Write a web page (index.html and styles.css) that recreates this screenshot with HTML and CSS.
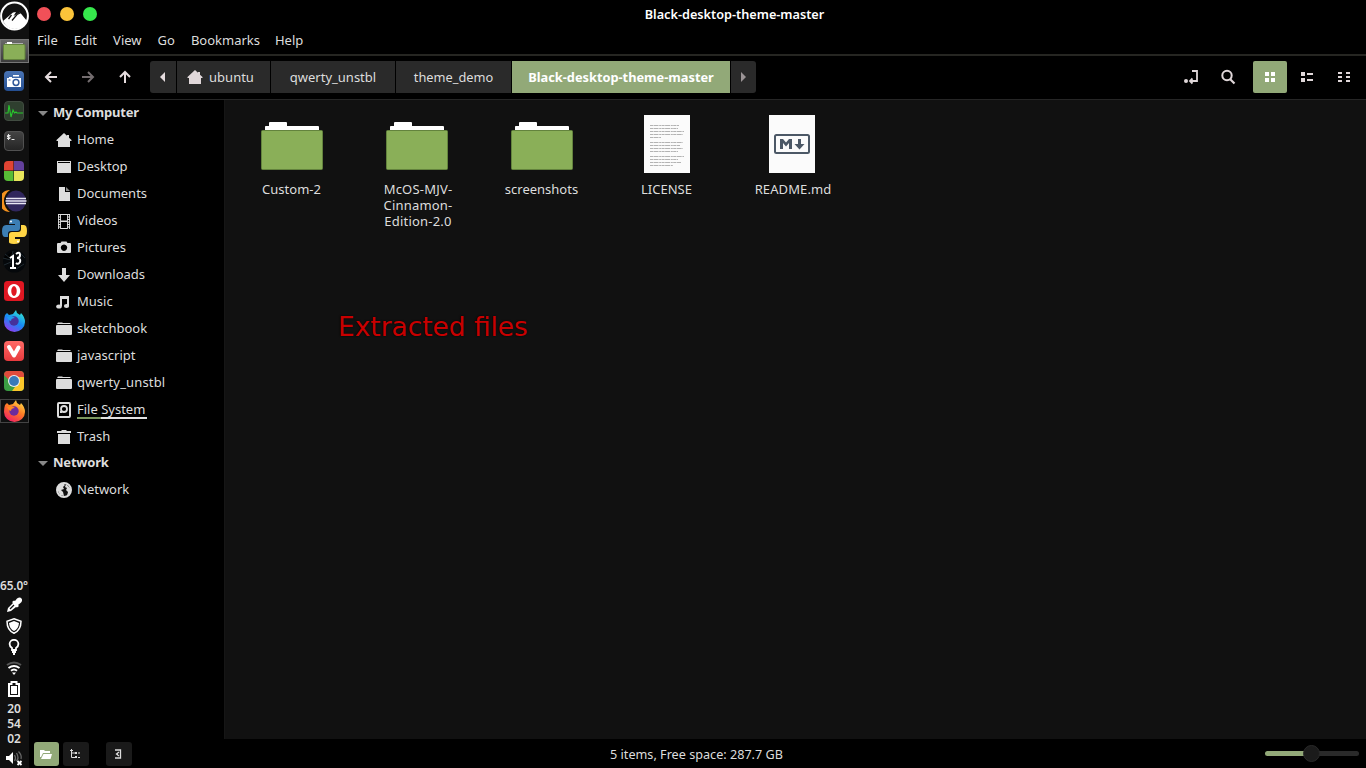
FILE: index.html
```html
<!DOCTYPE html>
<html lang="en">
<head>
<meta charset="utf-8">
<title>Black-desktop-theme-master</title>
<link rel="stylesheet" href="styles.css">
</head>
<body>
<svg class="defs" width="0" height="0">
  <defs>
    <linearGradient id="blue" x2="0" y2="1"><stop stop-color="#4a74b4"/><stop offset="1" stop-color="#244e91"/></linearGradient>
    <linearGradient id="dark" x2="0" y2="1"><stop stop-color="#444"/><stop offset="1" stop-color="#242424"/></linearGradient>
    <linearGradient id="fx" x1=".8" x2=".2" y2="1"><stop stop-color="#ffe14a"/><stop offset=".45" stop-color="#ff7b24"/><stop offset="1" stop-color="#f0196a"/></linearGradient>
    <linearGradient id="fd" x1=".8" x2=".2" y2="1"><stop stop-color="#36edd0"/><stop offset=".5" stop-color="#168af5"/><stop offset="1" stop-color="#9b35ef"/></linearGradient>
    <linearGradient id="red" x2="0" y2="1"><stop stop-color="#ff6a66"/><stop offset="1" stop-color="#e83a3e"/></linearGradient>
  </defs>
  <symbol id="home" viewBox="0 0 16 16"><path d="M8 1 L0.5 8 V9 H2 V15 H14 V9 H15.5 V8 L13 5.7 V3 H11 V3.8Z"/></symbol>
  <symbol id="folder" viewBox="0 0 16 16"><path d="M1 3 L2 1.500 H6 L7 2 H14 L15 3Z M0 5 Q0 4 1 4 H15 Q16 4 16 5 V13 Q16 14 15 14 H1 Q0 14 0 13Z"/></symbol>
  <symbol id="bigfolder" viewBox="0 0 62 50"><path d="M4 12V6.500Q4 6 5 6H8V3Q8 2 9 2H25Q26 2 26 3V6H57Q58 6 58 7V12Z" fill="#fff"/><rect x=".5" y="10.500" width="61" height="39" rx="1" fill="#8aaf58" stroke="#63833d"/></symbol>
</svg>
<div class="desktop">
  <nav class="dock">
    <div class="launch logo"><svg width="29" height="30" viewBox="0 0 29 30"><circle cx="14.500" cy="15" r="13.400" fill="#111" stroke="#fff" stroke-width="2"/><path d="M3 20 13 11.500 16 11 13.500 15 20 11.500 27 20 Q23 28 14.500 28 Q7 28 3 20Z" fill="#fff"/><path d="m12 19.500 5-6 4-2M11.500 14 8.500 18" fill="none" stroke="#111" stroke-width="1.300"/></svg></div>
    <div class="launch files"><svg width="23" height="20" viewBox="0 0 23 20"><path d="M2 5V2.500H4V1H9V2.500H20V5Z" fill="#fff"/><rect x=".5" y="3.500" width="21.500" height="15" rx="1" fill="#8aaf58" stroke="#63833d"/></svg></div>
    <div class="launch"><svg width="20" height="20"><rect width="20" height="20" rx="4" fill="url(#blue)"/><path d="M9 4h6v1.500H9zM3 7h2V6h3v1h9v9H3z" fill="#fff"/><circle cx="12" cy="11.500" r="2.900" fill="#fff" stroke="#31599a" stroke-width="1.500"/><path d="M4.500 9h2" stroke="#31599a"/></svg></div>
    <div class="launch"><svg width="20" height="20"><rect x=".5" y=".5" width="19" height="19" rx="3.500" fill="#2f3f2f" stroke="#414c41"/><path d="M1 12h3l1-8 2 12 2-7 1.500 3 1.500-1 1 1h6" fill="none" stroke="#28c72d" stroke-width="1.100"/></svg></div>
    <div class="launch"><svg width="20" height="20"><rect x=".5" y=".5" width="19" height="19" rx="3.500" fill="url(#dark)" stroke="#515151"/><path d="M4.500 3v6M6.500 4.500H3.500v1.500H6v1.500H3M7.500 8.500h3" fill="none" stroke="#e8e8e8"/></svg></div>
    <div class="launch"><svg width="20" height="20"><path d="M4 0h5.500v9.500H0V4q0-4 4-4" fill="#e04433"/><path d="M10 0h6q4 0 4 4v5.500H10z" fill="#63409b"/><path d="M0 10h9.500v10H4q-4 0-4-4z" fill="#58bd36"/><path d="M10 10h10v6q0 4-4 4h-6z" fill="#e9e65b"/></svg></div>
    <div class="launch"><svg width="25" height="22"><path d="M8 0A11 11 0 0 0 8 22A13 13 0 0 1 8 0" fill="#f5921e"/><ellipse cx="14" cy="11" rx="10" ry="10.500" fill="#30265d"/><path d="M4 8.500h20M3.500 11h21M4 13.500h20" stroke="#e8e6f4" stroke-width="1.400"/></svg></div>
    <div class="launch"><svg width="25" height="25" viewBox="0 0 25 25"><path d="M12 0q6 0 6 3v6q0 3-3 3H9q-3 0-3 3v3H3q-3 0-3-6t4-6h9V5H7V3q0-3 5-3" fill="#3c7eb4"/><path d="M19 6h3q3 0 3 6t-4 6h-8v2h5v2q0 3-6 3t-5-3v-6q0-3 3-3h6q3 0 3-3z" fill="#ffd545"/><circle cx="9" cy="2.500" r="1" fill="#fff"/><circle cx="16" cy="22.500" r="1" fill="#fff"/></svg></div>
    <div class="launch"><svg width="25" height="24"><circle cx="12.500" cy="12" r="11.500" fill="#05080b"/><path d="m1 9 8 2 2-9M2 16l7-3M14 20l8-5M3 5l6 5M17 3l6 6" stroke="#27333b" stroke-width=".8"/><path d="M8 9l3-2v12M8 19h6M14 5q4-3 4 1 0 3-3 3 4 0 3 4-2 3-4 1" fill="none" stroke="#fff" stroke-width="2"/></svg></div>
    <div class="launch"><svg width="20" height="20"><rect width="20" height="20" rx="3.500" fill="#df1722"/><path fill-rule="evenodd" d="M10 3a6.300 7 0 1 0 .01 0zM10 5a2.700 5 0 1 1-.01 0z" fill="#fff"/></svg></div>
    <div class="launch"><svg width="22" height="22" viewBox="0 0 22 22"><path d="M2 5l2-2 2 2 4-1 3-4 1 3 3 2 1-2q4 4 4 9a10.500 10 0 0 1-21 0q0-4 1-7" fill="url(#fd)"/><circle cx="11" cy="11" r="4.700" fill="#45309b"/><path d="M4 7q5-2 8 1-4 0-4 3-3-1-4-4" fill="#2299ee"/></svg></div>
    <div class="launch"><svg width="20" height="20"><rect width="20" height="20" rx="4" fill="url(#red)"/><path d="M5 6l5 8.500 4.500-8" fill="none" stroke="#fff" stroke-width="4" stroke-linecap="round" stroke-linejoin="round"/></svg></div>
    <div class="launch"><svg width="20" height="20"><rect width="20" height="20" rx="4" fill="#3b9d43"/><path d="M0 4q0-4 4-4h12q4 0 4 4v2H9L5 9z" fill="#df4b3c"/><path d="M11 6h9v10q0 4-4 4H8l6-8z" fill="#fbc72a"/><circle cx="10" cy="10" r="6" fill="#eee"/><circle cx="10" cy="10" r="4.900" fill="#3979b9"/></svg></div>
    <div class="launch running"><svg width="22" height="22" viewBox="0 0 22 22"><path d="M2 5l2-2 2 2 4-1 3-4 1 3 3 2 1-2q4 4 4 9a10.500 10 0 0 1-21 0q0-4 1-7" fill="url(#fx)"/><circle cx="11" cy="11" r="4.700" fill="#6b2b9d"/><path d="M4 7q5-2 8 1-4 0-4 3-3-1-4-4" fill="#ff8a22"/></svg></div>
    <div class="tray">
      <span class="temp">65.0°</span>
      <svg width="16" height="16"><path d="M1 15l1-4 5-5-1-1 2-1.500L9 4l2-2.500q3-2 4.500 0T14.500 6L12 8l1 1-2 1.500L10 10l-5 4z" fill="#fff"/><path d="M4 12l4-4" stroke="#111" stroke-width="1.300"/></svg>
      <svg width="16" height="16"><path d="M8 .8l7 2.400q0 9-7 12-7-3-7-12z" fill="none" stroke="#fff" stroke-width="1.500"/><path d="M8 3l5 2q-.5 6-5 8-4.500-2-5-8z" fill="#fff"/></svg>
      <svg width="16" height="16"><path d="M6 11V9Q3.600 7.500 3.600 5a4.400 4.200 0 0 1 8.800 0q0 2.500-2.400 4v2zM6 13h4M7 15h2" fill="none" stroke="#fff" stroke-width="1.800"/></svg>
      <svg width="16" height="16"><path d="M1 5q7-5 14 0" fill="none" stroke="#555" stroke-width="2"/><path d="M2.500 8q5.500-4 11 0M5 10.700q3-2.500 6 0" fill="none" stroke="#fff" stroke-width="1.900"/><path d="M6 12.500h4L8 15z" fill="#fff"/></svg>
      <svg width="16" height="16"><path d="M3 3h2.500V1h5v2H13v12H3z" fill="none" stroke="#fff" stroke-width="2"/><path d="M5 5h6v8H5z" fill="#fff"/></svg>
      <div class="clock"><span>20</span><span>54</span><span>02</span></div>
      <svg width="18" height="16"><path d="M1 6h3l4-4v12l-4-4H1z" fill="#fff"/><path d="M9.500 5q2 3 0 6M11.500 3q3 5 0 8M13.500 1.500Q17 5 16 9" fill="none" stroke="#666" stroke-width="1.300"/><path d="m12.500 11 4 4m0-4-4 4" stroke="#fff" stroke-width="1.900"/></svg>
    </div>
  </nav>
  <main class="window">
    <header class="titlebar"><div class="lights"><i class="close"></i><i class="min"></i><i class="max"></i></div><h1>Black-desktop-theme-master</h1></header>
    <div class="menubar"><span>File</span><span>Edit</span><span>View</span><span>Go</span><span class="bm">Bookmarks</span><span>Help</span></div>
    <div class="toolbar">
      <div class="arrows">
        <svg width="16" height="16"><path d="M14 8H3M8 3L3 8l5 5"/></svg>
        <svg class="dim" width="16" height="16"><path d="M2 8h11M8 3l5 5-5 5"/></svg>
        <svg width="16" height="16"><path d="M8 14V3M3 8l5-5 5 5"/></svg>
      </div>
      <div class="crumbs">
        <span class="c-prev"><svg width="6" height="10"><path d="M5 0v10L0 5z" fill="#e5dcde"/></svg></span>
        <span class="c-home"><svg width="16" height="16" fill="#e0d7d9"><use href="#home"/></svg>ubuntu</span>
        <span class="c-user">qwerty_unstbl</span>
        <span class="c-demo">theme_demo</span>
        <span class="c-active">Black-desktop-theme-master</span>
        <span class="c-next"><svg width="6" height="10"><path d="M1 0v10l5-5z" fill="#9b9496"/></svg></span>
      </div>
      <div class="tools">
        <svg class="entry" width="16" height="16"><circle cx="3" cy="12" r="2" fill="#e0d7d9"/><path d="M9 2h5v10H7M9.500 9.500L7 12l2.500 2.500" fill="none" stroke="#e0d7d9" stroke-width="1.800"/></svg>
        <svg class="search" width="16" height="16"><circle cx="7" cy="6.500" r="4.700" fill="none" stroke="#e0d7d9" stroke-width="2"/><path d="m10 10 4.500 4.500" stroke="#e0d7d9" stroke-width="2.200"/></svg>
        <span class="view"><svg width="10" height="10"><path d="M0 0h4v4H0zM6 0h4v4H6zM0 6h4v4H0zM6 6h4v4H6z" fill="#fff"/></svg></span>
        <svg class="list" width="12" height="10"><path d="M0 0h4v4H0zM6 1h6v2H6zM0 6h4v4H0zM6 7h6v2H6z" fill="#e0d7d9"/></svg>
        <svg class="compact" width="12" height="10"><path d="M0 0h4v2H0zM8 0h4v2H8zM0 4h4v2H0zM8 4h4v2H8zM0 8h4v2H0zM8 8h4v2H8z" fill="#e0d7d9"/></svg>
      </div>
    </div>
    <div class="body">
      <aside class="sidebar">
        <h2><i></i>My Computer</h2>
        <div class="place"><svg width="16" height="16"><use href="#home"/></svg><span>Home</span></div>
        <div class="place"><svg width="16" height="16"><path d="M1 2h14v1H1zM1 4h14v10H1zM1 2h1v4H1zM14 2h1v4h-1z"/></svg><span>Desktop</span></div>
        <div class="place"><svg width="16" height="16"><path d="M3 1h6v5h5v9H3z"/><path d="M10 1l4 4h-4z" fill="#888"/></svg><span>Documents</span></div>
        <div class="place"><svg width="16" height="16"><path fill-rule="evenodd" d="M2 1h12v15H2zM5 2v5.500h6V2zM5 9v6h6V9z"/><path d="M3.500 2v14M12.500 2v14" stroke="#000" stroke-dasharray="1.500 1" stroke-width="1.200"/></svg><span>Videos</span></div>
        <div class="place"><svg width="16" height="16"><path fill-rule="evenodd" d="M2 3h2.500l1-1.500h5l1 1.500H14q1 0 1 1v8q0 1-1 1H2q-1 0-1-1V4q0-1 1-1zM8 4.500a3.200 3.200 0 1 0 .01 0z"/></svg><span>Pictures</span></div>
        <div class="place"><svg width="16" height="16"><path d="M6 1h4v7h4l-6 7-6-7h4z"/></svg><span>Downloads</span></div>
        <div class="place"><svg width="16" height="16"><path d="M4 2h9v3H4zM4 4h2v8H4zM11 4h2v8h-2z"/><ellipse cx="3" cy="12.500" rx="2.800" ry="2"/><ellipse cx="10.500" cy="12" rx="2.600" ry="2"/></svg><span>Music</span></div>
        <div class="place"><svg width="16" height="16"><use href="#folder"/></svg><span>sketchbook</span></div>
        <div class="place"><svg width="16" height="16"><use href="#folder"/></svg><span>javascript</span></div>
        <div class="place"><svg width="16" height="16"><use href="#folder"/></svg><span class="wide">qwerty_unstbl</span></div>
        <div class="place"><svg width="16" height="16"><rect x="2" y="1" width="12" height="14" rx="1" fill="none" stroke="#ddd" stroke-width="2"/><circle cx="8" cy="7" r="3" fill="none" stroke="#ddd" stroke-width="1.800"/><path d="M4 9h2v2H4z"/></svg><span class="disk">File System</span></div>
        <div class="place"><svg width="16" height="16"><path d="M1 2h4l1-1h4l1 1h4v2H1zM2 5h12v10H2z"/></svg><span>Trash</span></div>
        <h2><i></i>Network</h2>
        <div class="place"><svg width="16" height="16"><circle cx="8" cy="8" r="7" fill="#111" stroke="#ddd" stroke-width="2"/><path d="M2 4l5-3 2 2-2 2 1 2-3 1 2 2 1 4-4-1-2-4zM10 2l4 4v5l-3 3 1-4-2-2 1-2-2-1z"/></svg><span>Network</span></div>
      </aside>
      <section class="files-view">
        <div class="file"><svg width="62" height="60"><use href="#bigfolder" y="5" height="50"/></svg><span>Custom-2</span></div>
        <div class="file"><svg width="62" height="60"><use href="#bigfolder" y="5" height="50"/></svg><span class="mc">McOS-MJV-<br>Cinnamon-<br>Edition-2.0</span></div>
        <div class="file"><svg width="62" height="60"><use href="#bigfolder" y="5" height="50"/></svg><span>screenshots</span></div>
        <div class="file"><svg width="46" height="60"><path d="M0 0h46v58H0z" fill="#fbfbfb"/><path d="M6 10.500h29M6 13.500h28M6 16.500h34M6 19.500h33M6 22.500h11M6 27.500h33M6 30.500h30M6 33.500h33M6 36.500h28M6 41.500h34M6 44.500h28M6 47.500h31M6 50.500h23" stroke="#b3b3b3" stroke-dasharray="3 .5 5 .7 2 .4"/></svg><span>LICENSE</span></div>
        <div class="file"><svg width="46" height="60"><path d="M0 0h46v58H0z" fill="#fbfbfb"/><rect x="6" y="20" width="34" height="18" rx="1.500" fill="none" stroke="#4c5866" stroke-width="2"/><path d="M11 34V24h3l3 3.500 3-3.500h3v10h-3v-6l-3 3.500-3-3.500v6zM29 24h3v5h3.500l-5 5.500-5-5.500H29z" fill="#4c5866"/></svg><span class="readme">README.md</span></div>
        <p class="note">Extracted files</p>
      </section>
    </div>
    <footer class="status">
      <div class="side-buttons">
        <span class="on"><svg width="12" height="10"><path d="M0 1h4l1 1h5v2H3L1 8H0z M3.500 5H12l-1.500 5H1z" fill="#fff"/></svg></span>
        <span><svg width="10" height="10"><path d="M1.500 0v8.500H5M1.500 4H5M0 1.500h3" fill="none" stroke="#ddd"/><path d="M5 3h2v2H5zM8 3.500h2v1H8zM5 7h2v2H5zM8 8h2v1H8z" fill="#ddd"/></svg></span>
        <span class="hide"><svg width="8" height="10"><path d="M1 1h5.500v8H1M5 3L2.500 5 5 7M2.500 5H4" fill="none" stroke="#ddd" stroke-width="1.300"/></svg></span>
      </div>
      <span class="summary">5 items, Free space: 287.7 GB</span>
      <div class="slider"><i></i></div>
    </footer>
  </main>
</div>
</body>
</html>
```
FILE: styles.css
```css
* { box-sizing: border-box; }
body { margin: 0; background: #000; color: #ddd; font: 13px/16px "Noto Sans", "Open Sans", sans-serif; overflow: hidden; }
svg { display: block; flex: none; }
.defs { position: absolute; }
h1, h2, p { margin: 0; font-size: 13px; }
.desktop { display: flex; width: 1366px; height: 768px; }

.dock { width: 29px; flex: none; background: #101010; display: flex; flex-direction: column; padding-top: 1px; }
.launch { width: 29px; height: 24px; margin-bottom: 6px; padding-right: 1px; display: flex; align-items: center; justify-content: center; flex: none; }
.logo { height: 30px; margin-bottom: 8px; padding: 0; }
.files { background: linear-gradient(#686868, #3c3c3c); border: 1px solid #777; }
.running { border: 1px solid #444; }
.tray { margin-top: auto; display: flex; flex-direction: column; align-items: center; height: 192px; padding: 1px 1px 0 0; font-weight: 600; font-size: 12px; }
.tray > svg { margin-bottom: 5px; }
.temp { font-size: 11.800px; letter-spacing: -.1px; margin: 0 -2px 4px; white-space: nowrap; }
.clock { display: flex; flex-direction: column; line-height: 15px; margin: -1px 0 4px; }
.clock span { display: block; }

.window { flex: 1; min-width: 0; display: flex; flex-direction: column; }
.titlebar { height: 28px; position: relative; display: flex; justify-content: center; align-items: center; padding-left: 74px; }
.titlebar h1 { font-weight: 600; font-size: 12.700px; color: #fff; }
.lights { position: absolute; left: 8px; top: 7px; display: flex; gap: 9px; }
.lights i { width: 14px; height: 14px; border-radius: 50%; background: #f15058; }
.lights .min { background: #fbc43a; }
.lights .max { background: #36e84c; }
.menubar { height: 28px; padding: 4px 0 0 8px; display: flex; gap: 16px; border-bottom: 2px solid #262622; }
.menubar .bm { margin-right: -1px; }
.toolbar { height: 44px; display: flex; align-items: center; padding: 0 9px 1px 14px; border-bottom: 1px solid #262626; }
.arrows { display: flex; gap: 21px; margin-right: 17px; }
.arrows svg { fill: none; stroke: #e5dcde; stroke-width: 2; }
.arrows .dim { stroke: #746d6f; }
.crumbs { display: flex; gap: 1px; height: 32px; }
.crumbs > span { background: #2a2a2a; display: flex; align-items: center; justify-content: center; white-space: nowrap; }
.crumbs .c-prev { width: 26px; border-radius: 3px 0 0 3px; }
.crumbs .c-home { width: 93px; gap: 6px; padding-right: 6px; }
.crumbs .c-user { width: 124px; }
.crumbs .c-demo { width: 115px; font-size: 12.800px; }
.crumbs .c-active { width: 218px; background: #92a978; color: #fff; font-weight: 700; font-size: 12.800px; }
.crumbs .c-next { width: 25px; border-radius: 0 3px 3px 0; }
.crumbs .c-next svg, .side-buttons svg { margin-right: 2px; }
.tools { margin-left: auto; display: flex; align-items: center; }
.search { margin-left: 21px; }
.view { width: 34px; height: 32px; margin: 0 14px 0 17px; background: #92a978; border-radius: 2px; display: flex; align-items: center; justify-content: center; }
.compact { margin: 0 7px 0 25px; }

.body { flex: 1; min-height: 0; display: flex; }
.sidebar { width: 196px; border-right: 1px solid #161616; }
.sidebar h2 { height: 26px; display: flex; align-items: center; padding: 0 0 2px 9px; letter-spacing: -.2px; }
.sidebar h2 i { border: 5px solid transparent; border-top-color: #888; border-bottom: 0; margin: 2px 5px 0 0; }
.place { height: 27px; display: flex; align-items: center; padding-left: 27px; gap: 5px; }
.place span { margin-bottom: 2px; }
.place svg { fill: #ddd; }
.place .wide { letter-spacing: .15px; }
.place .disk { border-bottom: 2px solid; border-image: linear-gradient(90deg, #7c9860 35%, #e2e2e2 35%) 1; line-height: 15px; margin: 0; padding-top: 1px; padding-right: 2px; }
.files-view { flex: 1; background: #111; position: relative; display: grid; grid-template-columns: repeat(5, 125px); align-content: start; padding: 15px 0 0 4px; }
.file { display: flex; flex-direction: column; align-items: center; gap: 6px; text-align: center; }
.file .mc { margin-left: 3px; letter-spacing: .2px; }
.file .readme { margin-left: 3px; letter-spacing: .1px; }
.note { position: absolute; left: 113px; top: 211px; color: #c80000; font: 26.400px/32px "DejaVu Sans", sans-serif; text-shadow: 0 0 2px #000; white-space: nowrap; }

.status { height: 29px; display: grid; grid-template-columns: 1fr auto 1fr; align-items: center; padding: 0 7px 0 5px; }
.summary { font-size: 12.650px; }
.side-buttons { display: flex; gap: 4px; }
.side-buttons span { width: 26px; height: 24px; border-radius: 3px; background: #1a1a1a; display: flex; align-items: center; justify-content: center; }
.side-buttons .on { background: #92a978; width: 25px; }
.side-buttons .hide { margin-left: 13px; }
.slider { justify-self: end; width: 94px; height: 5px; border-radius: 3px; background: linear-gradient(90deg, #92a978 47px, #2a2a2a 47px); }
.slider i { display: block; width: 17px; height: 17px; border-radius: 50%; background: #1b1b1b; border: 1px solid #292929; margin: -6px 0 0 38px; }
```
